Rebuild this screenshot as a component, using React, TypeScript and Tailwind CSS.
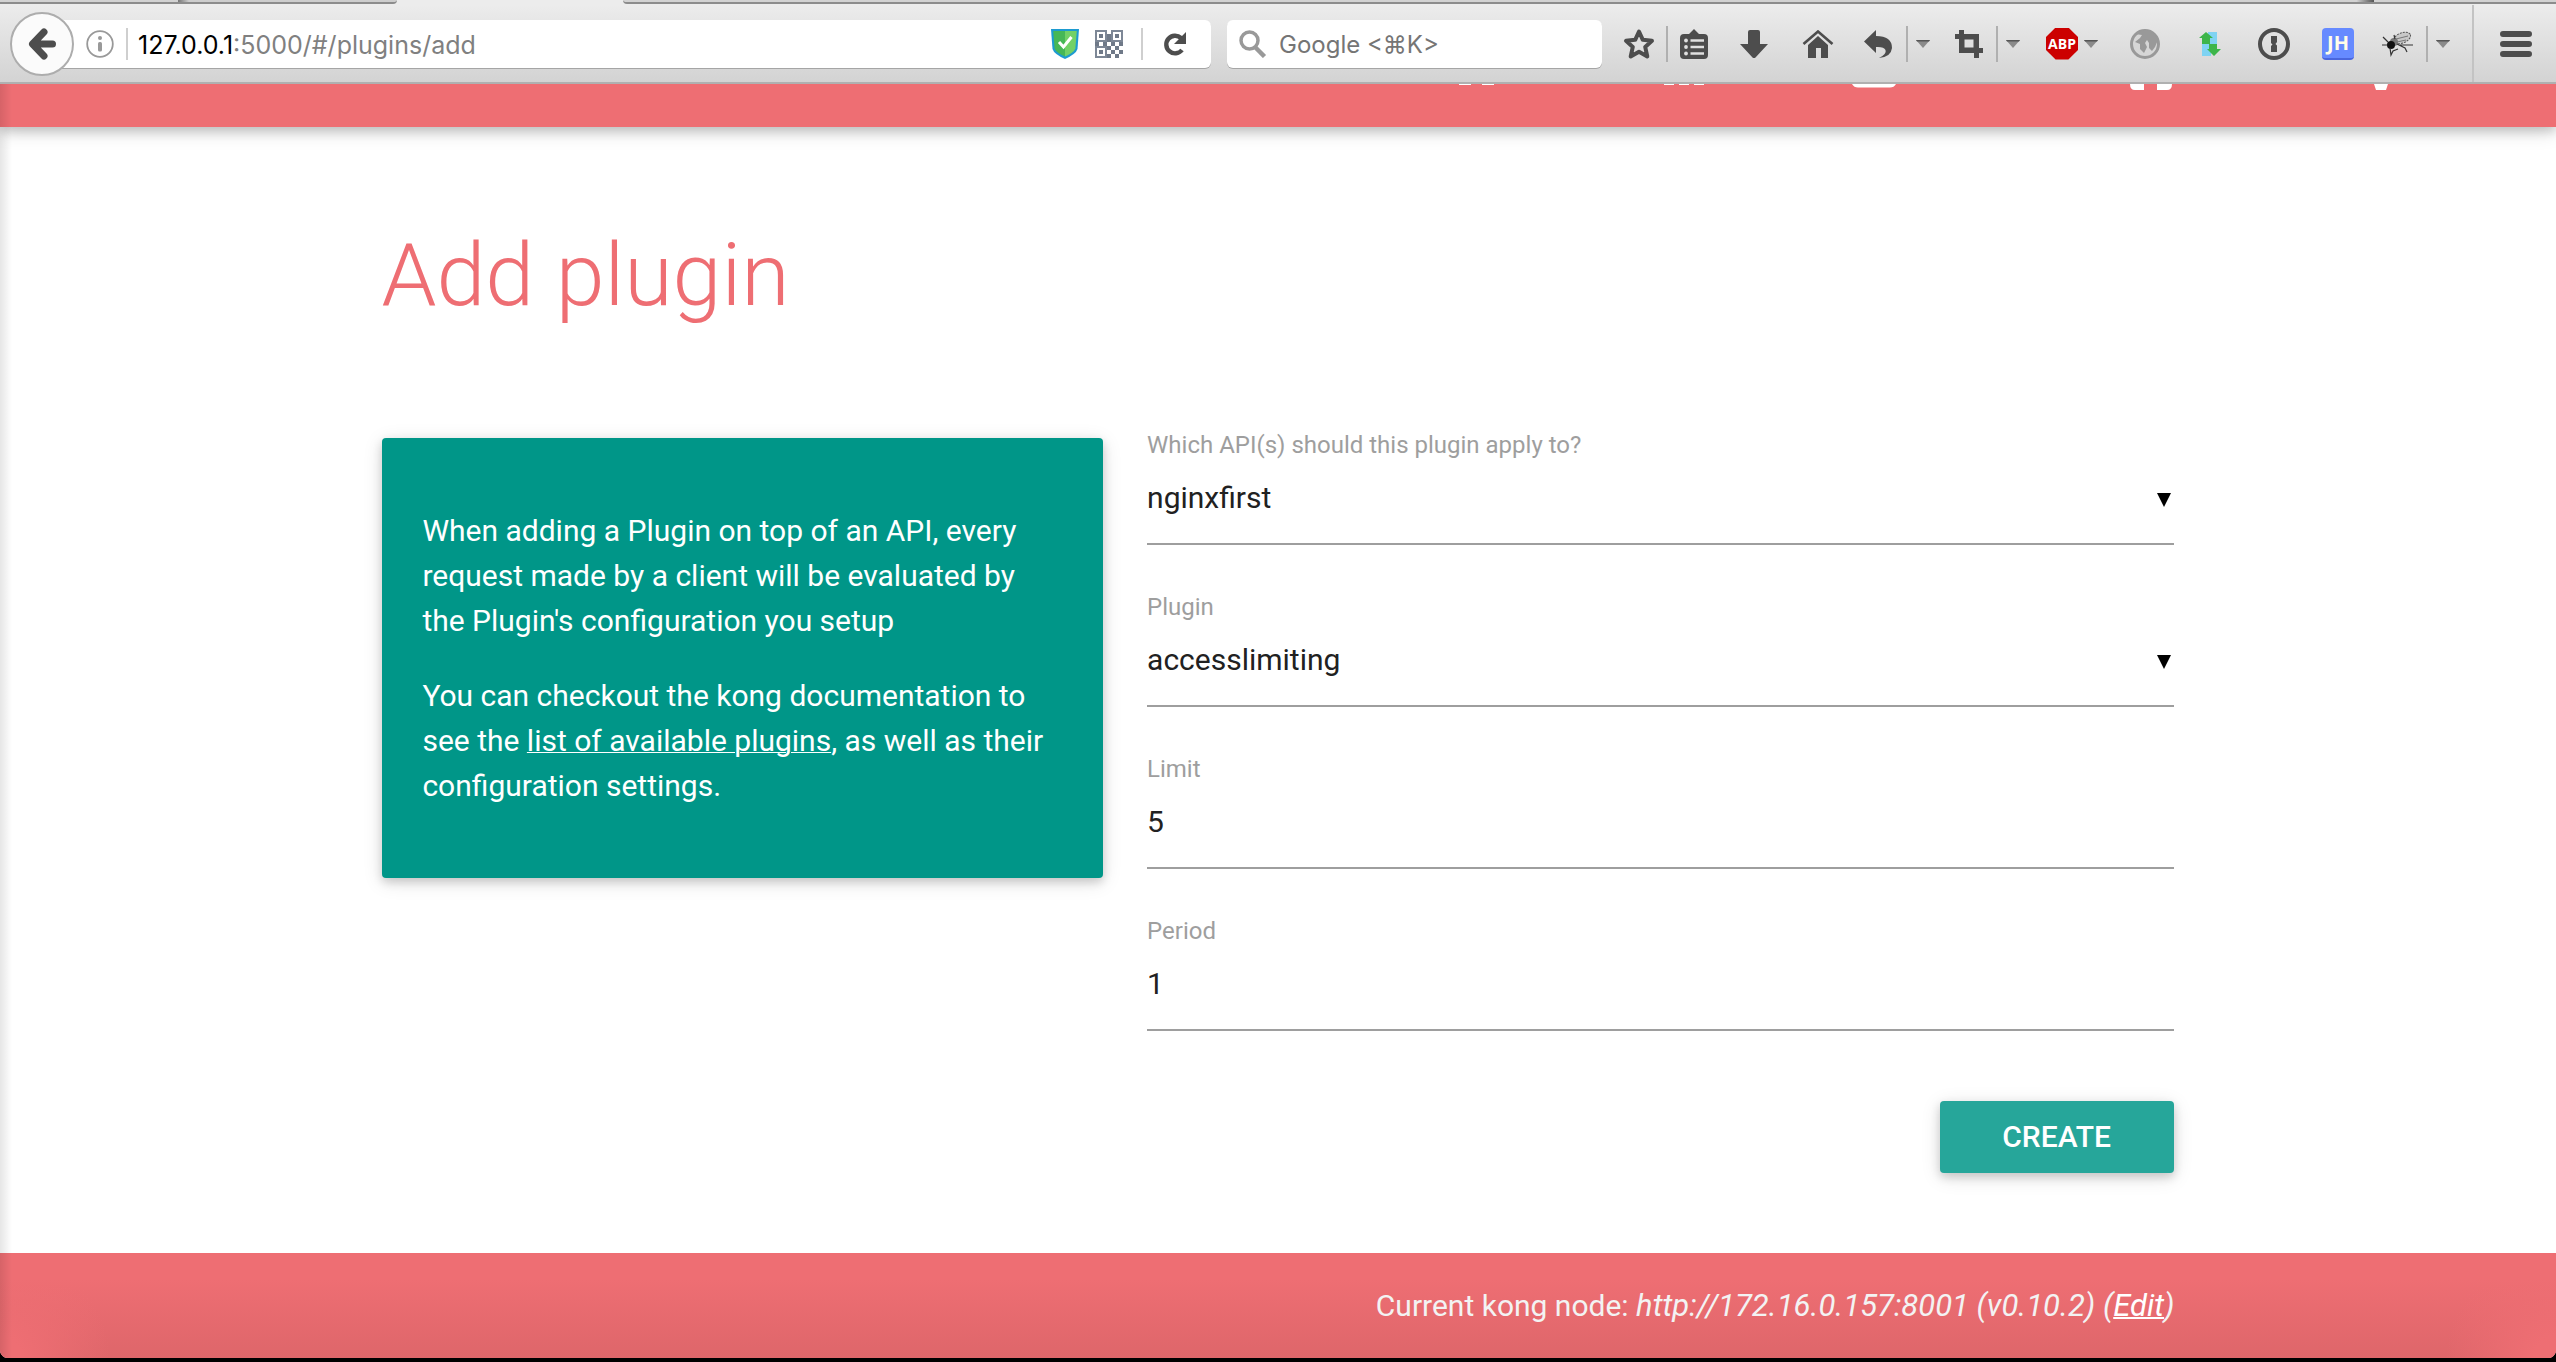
import React from "react";

const dark = "#4d4d4d";

function Icon({ w, h, className, children }: { w: number; h: number; className?: string; children: React.ReactNode }) {
  return (
    <svg width={w} height={h} viewBox={`0 0 ${w} ${h}`} className={`block shrink-0 ${className ?? ""}`} aria-hidden="true">
      {children}
    </svg>
  );
}

function Tool({ label, className, children }: { label: string; className?: string; children: React.ReactNode }) {
  return (
    <button type="button" aria-label={label} className={`flex h-9 shrink-0 items-center justify-center ${className ?? ""}`}>
      {children}
    </button>
  );
}

function Sep() {
  return <span className="h-9 w-0.5 shrink-0 bg-[#b0b0b0]" />;
}

function Caret({ label }: { label: string }) {
  return (
    <Tool label={label} className="w-[14px]">
      <Icon w={14} h={8}>
        <path d="M0 0H14L7 8Z" fill="#8a8a8a" />
        <path d="M0 0H14L13 1.5H1Z" fill="#555" />
      </Icon>
    </Tool>
  );
}

function TabStrip() {
  return (
    <div className="flex h-[5px] w-full bg-[#ececec]">
      <div className="h-1 w-[178px] border-b-2 border-[#8c8c8c] bg-[#d2d2d2]" />
      <div className="h-1 w-[219px] rounded-br-lg border-b-2 border-[#8c8c8c] bg-linear-to-r from-[#777] to-[#cdcdcd] to-5%" />
      <div className="w-[226px]" />
      <div className="h-1 flex-1 rounded-bl-lg border-b-2 border-[#8c8c8c] bg-linear-to-l from-[#555] to-[#d2d2d2] to-1%" />
      <div className="h-1 w-[182px] border-b-2 border-[#8c8c8c] bg-[#d2d2d2]" />
    </div>
  );
}

function AddressBar() {
  return (
    <div className="flex min-w-0 flex-1 items-center">
      <button
        type="button"
        aria-label="Back"
        className="z-10 flex size-16 shrink-0 items-center justify-center rounded-full border-2 border-[#adadad] bg-[#fbfbfb]"
      >
        <Icon w={28} h={32}>
          <path d="M16 4L4.500 16L16 28M5 16H24.500" fill="none" stroke={dark} strokeWidth="7" strokeLinejoin="round" strokeLinecap="round" />
        </Icon>
      </button>
      <div className="-ml-3 flex h-12 min-w-0 flex-1 items-center rounded-r-md bg-white pr-6 pl-6 shadow-[0_1px_0_#a5a5a5]">
        <Icon w={28} h={28}>
          <circle cx="14" cy="14" r="12.8" fill="none" stroke="#999" strokeWidth="1.8" />
          <circle cx="14" cy="8" r="2" fill="#999" />
          <rect x="12" y="12" width="4" height="9.5" rx="1.6" fill="#999" />
        </Icon>
        <span className="ml-3 h-8 w-0.5 shrink-0 bg-[#cfcfcf]" />
        <div className="ml-[10px] min-w-0 flex-1 pt-0.5 font-['Inter',sans-serif] text-[25px] leading-8 text-[#808080]">
          <span className="text-black">127.0.0.1</span>:5000/#/plugins/add
        </div>
        <Icon w={28} h={30}>
          <path d="M0 0H28L26.5 20Q25 25 14 30Q3 25 1.5 20Z" fill="#1d9bd0" />
          <path d="M2.2 2H14V27.5Q5 23.500 3.600 19.500Z" fill="#46b756" />
          <path d="M25.800 2H14V27.500Q23 23.500 24.400 19.500Z" fill="#72d166" />
          <path d="M8 13L12.500 18L20.500 8" fill="none" stroke="#fff" strokeWidth="3" />
        </Icon>
        <Icon w={28} h={28} className="ml-4">
          <path d="M1 1H11V11H1ZM17 1H27V11H17ZM1 17H11V27H1Z" fill="none" stroke="#7d8796" strokeWidth="2" />
          <path
            fill="#6f7988"
            d="M4 4h4v4H4zM20 4h4v4h-4zM4 20h4v4H4zM12 4h4v4h-4zM8 12h4v4H8zM0 12h4v4H0zM12 8h4v4h-4zM16 12h4v4h-4zM24 12h4v4h-4zM12 16h4v4h-4zM20 16h4v4h-4zM16 20h4v4h-4zM24 20h4v4h-4zM12 24h4v4h-4zM20 24h4v4h-4z"
          />
        </Icon>
        <span className="ml-[18px] h-8 w-0.5 shrink-0 bg-[#cfcfcf]" />
        <button type="button" aria-label="Reload" className="ml-5 shrink-0">
          <Icon w={24} h={26}>
            <path d="M18 7A8.800 8.800 0 1 0 19 19" fill="none" stroke={dark} strokeWidth="4.400" />
            <path d="M23 1V13H11Z" fill={dark} />
          </Icon>
        </button>
      </div>
    </div>
  );
}

function Browser() {
  return (
    <header>
      <TabStrip />
      <div className="flex h-[79px] items-center border-b-2 border-[#b0b0b0] bg-linear-to-b from-[#ececec] to-[#d3d3d3] pl-[10px]">
        <AddressBar />
        <div className="ml-4 flex h-12 w-[375px] shrink-0 items-center rounded-md bg-white pl-3 shadow-[0_1px_0_#a5a5a5]">
          <Icon w={28} h={28}>
            <circle cx="10.500" cy="10.500" r="8.500" fill="none" stroke="#999" strokeWidth="3.500" />
            <path d="M16 17L25.500 26.500" stroke="#999" strokeWidth="4.500" />
          </Icon>
          <input
            type="text"
            aria-label="Search"
            placeholder="Google <⌘K>"
            className="ml-3 min-w-0 flex-1 bg-transparent pt-0.5 font-['Inter','DejaVu_Sans',sans-serif] text-[24px] leading-8 outline-none placeholder:text-[#757575]"
          />
        </div>
        <div className="flex h-full shrink-0 items-center">
          <Tool label="Bookmark this page" className="ml-[21px]">
            <Icon w={32} h={32}>
              <path d="M16 3.500L19.800 11.800L29 12.800L22.200 18.900L24.300 28.500L16 23.800L7.700 28.500L9.800 18.900L3 12.800L12.200 11.800Z" fill="none" stroke={dark} strokeWidth="4" strokeLinejoin="round" />
            </Icon>
          </Tool>
          <span className="ml-[11px]" />
          <Sep />
          <Tool label="Bookmarks" className="ml-3">
            <Icon w={28} h={30}>
              <path d="M4 5H9L14 0L19 5H24Q28 5 28 9V26Q28 30 24 30H4Q0 30 0 26V9Q0 5 4 5Z" fill={dark} />
              <path d="M10.500 11.500H24M10.500 18H24M10.500 24.500H24" stroke="#e0e0e0" strokeWidth="2.600" />
              <circle cx="6" cy="11.500" r="1.900" fill="#e0e0e0" />
              <circle cx="6" cy="18" r="1.900" fill="#e0e0e0" />
              <circle cx="6" cy="24.500" r="1.900" fill="#e0e0e0" />
            </Icon>
          </Tool>
          <Tool label="Downloads" className="ml-8">
            <Icon w={28} h={28}>
              <path d="M8 2Q8 0 10 0H18Q20 0 20 2V14H28L15.500 27.500Q14 28.500 12.500 27.500L0 14H8Z" fill={dark} />
            </Icon>
          </Tool>
          <Tool label="Home" className="ml-[34px]">
            <Icon w={32} h={28}>
              <path d="M1.500 14L16 1.500L30.500 14" fill="none" stroke={dark} strokeWidth="2.600" />
              <path d="M16 6L26 15V28H19V18H14V28H6V15Z" fill={dark} />
            </Icon>
          </Tool>
          <Tool label="Undo" className="ml-[30px]">
            <Icon w={28} h={28}>
              <path d="M12 0V6Q28 6 28 18Q27 27 15 28Q23 24 21.500 20Q20 16.500 12 17V23L0 11.500Z" fill={dark} />
            </Icon>
          </Tool>
          <span className="ml-[14px]" />
          <Sep />
          <span className="ml-2" />
          <Caret label="Undo list" />
          <Tool label="Crop screenshot" className="ml-[25px]">
            <Icon w={28} h={28}>
              <path d="M4 0H9V4H24V18H28V23H24V28H19V23H4V9H0V4H4ZM9.500 9.500V17.500H18.500V9.500Z" fill={dark} fillRule="evenodd" />
            </Icon>
          </Tool>
          <span className="ml-[13px]" />
          <Sep />
          <span className="ml-2" />
          <Caret label="Crop options" />
          <Tool label="Adblock Plus" className="ml-[26px]">
            <span className="flex size-8 items-center justify-center bg-[#cc0000] font-['Open_Sans',sans-serif] text-[14px] font-bold text-white [clip-path:polygon(30%_0,70%_0,100%_30%,100%_70%,70%_100%,30%_100%,0_70%,0_30%)]">
              ABP
            </span>
          </Tool>
          <span className="ml-[6px]" />
          <Caret label="Adblock options" />
          <Tool label="Proxy" className="ml-8">
            <Icon w={30} h={30}>
              <circle cx="15" cy="15" r="13.500" fill="#d6d6d6" stroke="#999" strokeWidth="3" />
              <path d="M5 5Q14 -2 24 4L28 11L25 18L22 22L19 19V14L17 11L15 14L17 18L14 24L10 20V15L5 13L10 9L12 6Z" fill="#999" />
            </Icon>
          </Tool>
          <Tool label="Transfers" className="ml-[39px]">
            <Icon w={22} h={26}>
              <path d="M9 1H18V13H9ZM3 13H12V25H3Z" fill="#7fd3f3" />
              <path d="M7 1L14 7H11V13H3V7H0ZM10 13H18V18H22L15 25L8 18H10Z" fill="#3db54a" />
            </Icon>
          </Tool>
          <Tool label="1Password" className="ml-[37px]">
            <Icon w={32} h={32}>
              <circle cx="16" cy="16" r="14" fill="none" stroke={dark} strokeWidth="4" />
              <path d="M13 8H19V14L17.500 16L19 17.500V24H13V18L14.500 16.500L13 15Z" fill={dark} />
            </Icon>
          </Tool>
          <Tool label="JSON handle" className="ml-8">
            <span className="flex size-8 items-center justify-center rounded border-b-2 border-[#4a66dd] bg-[#668aff] font-['Open_Sans',sans-serif] text-[20px] font-bold text-[#fffde8]">
              JH
            </span>
          </Tool>
          <Tool label="Firebug" className="ml-7">
            <Icon w={32} h={26}>
              <ellipse cx="20" cy="7" rx="9" ry="5" transform="rotate(-22 20 7)" fill="#c8c8c8" stroke="#555" strokeWidth="1" strokeDasharray="2 1" />
              <path d="M14 8L26 5M15 11L24 9" stroke="#777" strokeWidth="1" />
              <ellipse cx="12" cy="11" rx="4" ry="4" fill="#777" />
              <ellipse cx="9" cy="14" rx="4" ry="4" fill="#111" />
              <path d="M6 11L1 6M5 14L0 14M8 17L9 24L11 20L16 18M15 13L23 17L25 21M18 14L31 14M13 8L12 4" fill="none" stroke="#333" strokeWidth="1.200" />
            </Icon>
          </Tool>
          <span className="ml-3" />
          <Sep />
          <span className="ml-2" />
          <Caret label="Firebug options" />
          <span className="ml-[22px] h-full w-0.5 bg-[#c3c3c3]" />
          <Tool label="Menu" className="mr-6 ml-[26px]">
            <Icon w={32} h={26}>
              <path d="M3 3H29M3 13H29M3 23H29" stroke={dark} strokeWidth="6" strokeLinecap="round" />
            </Icon>
          </Tool>
        </div>
      </div>
    </header>
  );
}

function SiteNav() {
  return (
    <nav className="z-10 flex h-[43px] justify-end bg-[#ee6e73] pr-[167px] shadow-[0_4px_10px_rgba(0,0,0,0.16),0_4px_20px_rgba(0,0,0,0.16)]">
      <Icon w={930} h={6}>
        <path
          fill="#fff"
          d="M0 0h12v1H0zM23 0h12v1H23zM205 0h10v1h-10zM220 0h10v1h-10zM235 0h10v1h-10zM393 0H437Q435 3.500 431 3.500H399Q395 3.500 393 0ZM671 0H685V6H676Q671 6 671 0ZM698 0H713Q713 6 708 6H698ZM915 0H929L927 6H917Z"
        />
      </Icon>
    </nav>
  );
}

const fieldClass =
  "block h-[88px] w-full appearance-none rounded-none border-b-2 border-[#9e9e9e] bg-transparent text-[30px] leading-10 text-[#212121] outline-none";

function Field({ id, label, children }: { id: string; label: string; children: React.ReactNode }) {
  return (
    <div>
      <label htmlFor={id} className="block text-[24px] leading-6 text-[#9e9e9e]">
        {label}
      </label>
      {children}
    </div>
  );
}

function SelectField({ id, label, value }: { id: string; label: string; value: string }) {
  return (
    <Field id={id} label={label}>
      <div className="relative">
        <select id={id} defaultValue={value} className={`${fieldClass} pb-1`}>
          <option value={value}>{value}</option>
        </select>
        <Icon w={14} h={14} className="pointer-events-none absolute top-9 right-[3px]">
          <path d="M0 0H14L7 14Z" fill="#000" />
        </Icon>
      </div>
    </Field>
  );
}

function TextField({ id, label, value }: { id: string; label: string; value: string }) {
  return (
    <Field id={id} label={label}>
      <input id={id} type="text" defaultValue={value} className={`${fieldClass} pb-1.5`} />
    </Field>
  );
}

export default function App() {
  return (
    <div className="flex min-h-screen flex-col bg-black font-['Roboto',sans-serif]">
      <Browser />
      <div className="relative flex flex-1 flex-col overflow-hidden rounded-b-lg bg-white">
        <SiteNav />
        <main className="mx-auto w-[70%] flex-1">
          <h1 className="-mx-0.5 mt-[100px] text-[88px] leading-[96px] font-light text-[#ee6e73]">Add plugin</h1>
          <div className="-mx-[23px] mt-[110px] flex items-start">
            <div className="w-5/12 px-[22px]">
              <section className="mt-[5px] rounded bg-[#009688] p-10 text-[30px] leading-[45px] text-white shadow-[0_4px_10px_rgba(0,0,0,0.16),0_4px_20px_rgba(0,0,0,0.12)]">
                <p className="my-[30px]">
                  When adding a Plugin on top of an API, every request made by a client will be evaluated by the Plugin's configuration you setup
                </p>
                <p className="my-[30px]">
                  You can checkout the kong documentation to see the{" "}
                  <a href="#plugins" className="underline decoration-1">
                    list of available plugins
                  </a>
                  , as well as their configuration settings.
                </p>
              </section>
            </div>
            <form className="flex w-7/12 flex-col gap-[50px] px-[22px]" onSubmit={(e) => e.preventDefault()}>
              <SelectField id="api" label="Which API(s) should this plugin apply to?" value="nginxfirst" />
              <SelectField id="plugin" label="Plugin" value="accesslimiting" />
              <TextField id="limit" label="Limit" value="5" />
              <TextField id="period" label="Period" value="1" />
              <button
                type="submit"
                className="mt-5 mb-20 h-[72px] w-[234px] self-end rounded bg-[#26a69a] text-[30px] leading-10 font-medium text-white shadow-[0_4px_10px_rgba(0,0,0,0.16),0_4px_20px_rgba(0,0,0,0.12)]"
              >
                CREATE
              </button>
            </form>
          </div>
        </main>
        <footer className="bg-[radial-gradient(110px_110px_at_0_100%,#ee6e73_20%,transparent),radial-gradient(110px_110px_at_100%_100%,#ee6e73_20%,transparent),linear-gradient(#ee6e73_25%,#de666a)]">
          <div className="mx-auto w-[70%]">
            <p className="-mr-0.5 py-[30px] text-right text-[30px] leading-[45px] text-[#f3f3f3]">
              Current kong node:{" "}
              <em className="text-[31px]">
                http://172.16.0.157:8001 (v0.10.2) (
                <a href="#edit" className="text-white underline decoration-2">
                  Edit
                </a>
                )
              </em>
            </p>
          </div>
        </footer>
        <div className="pointer-events-none absolute inset-y-0 left-0 z-20 w-3 bg-linear-to-r from-black/10 to-transparent" />
      </div>
      <div className="h-1 bg-black" />
    </div>
  );
}
